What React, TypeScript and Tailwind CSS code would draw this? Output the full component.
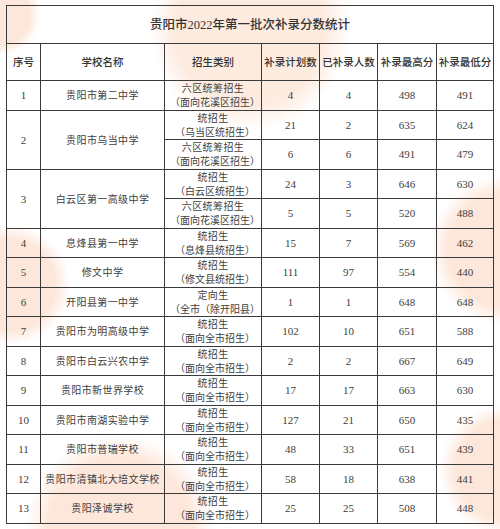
import React from 'react'

type Row = {
  no: number
  school: string
  subs: { type: string; area: string; plan: number; done: number; max: number; min: number }[]
}

const rows: Row[] = [
  { no: 1, school: '贵阳市第二中学', subs: [{ type: '六区统筹招生', area: '（面向花溪区招生）', plan: 4, done: 4, max: 498, min: 491 }] },
  {
    no: 2,
    school: '贵阳市乌当中学',
    subs: [
      { type: '统招生', area: '（乌当区统招生）', plan: 21, done: 2, max: 635, min: 624 },
      { type: '六区统筹招生', area: '（面向花溪区招生）', plan: 6, done: 6, max: 491, min: 479 },
    ],
  },
  {
    no: 3,
    school: '白云区第一高级中学',
    subs: [
      { type: '统招生', area: '（白云区统招生）', plan: 24, done: 3, max: 646, min: 630 },
      { type: '六区统筹招生', area: '（面向花溪区招生）', plan: 5, done: 5, max: 520, min: 488 },
    ],
  },
  { no: 4, school: '息烽县第一中学', subs: [{ type: '统招生', area: '（息烽县统招生）', plan: 15, done: 7, max: 569, min: 462 }] },
  { no: 5, school: '修文中学', subs: [{ type: '统招生', area: '（修文县统招生）', plan: 111, done: 97, max: 554, min: 440 }] },
  { no: 6, school: '开阳县第一中学', subs: [{ type: '定向生', area: '（全市（除开阳县）', plan: 1, done: 1, max: 648, min: 648 }] },
  { no: 7, school: '贵阳市为明高级中学', subs: [{ type: '统招生', area: '（面向全市招生）', plan: 102, done: 10, max: 651, min: 588 }] },
  { no: 8, school: '贵阳市白云兴农中学', subs: [{ type: '统招生', area: '（面向全市招生）', plan: 2, done: 2, max: 667, min: 649 }] },
  { no: 9, school: '贵阳市新世界学校', subs: [{ type: '统招生', area: '（面向全市招生）', plan: 17, done: 17, max: 663, min: 630 }] },
  { no: 10, school: '贵阳市南湖实验中学', subs: [{ type: '统招生', area: '（面向全市招生）', plan: 127, done: 21, max: 650, min: 435 }] },
  { no: 11, school: '贵阳市普瑞学校', subs: [{ type: '统招生', area: '（面向全市招生）', plan: 48, done: 33, max: 651, min: 439 }] },
  { no: 12, school: '贵阳市清镇北大培文学校', subs: [{ type: '统招生', area: '（面向全市招生）', plan: 58, done: 18, max: 638, min: 441 }] },
  { no: 13, school: '贵阳泽诚学校', subs: [{ type: '统招生', area: '（面向全市招生）', plan: 25, done: 25, max: 508, min: 448 }] },
]

const cjk = "font-['Noto_Sans_CJK_SC',sans-serif]"
const num = "font-['Liberation_Serif','Noto_Sans_CJK_SC',serif]"
const td = 'border border-[#3a3a3a] text-center align-middle p-0'

// faint watermark blobs painted as soft background layers
const blobs =
  'bg-[radial-gradient(circle_100px_at_250px_30px,#fdebe0_75%,#fdebe000),radial-gradient(circle_75px_at_505px_250px,#fde7da_75%,#fde7da00),radial-gradient(circle_60px_at_10px_285px,#fde7da_75%,#fde7da00),radial-gradient(circle_95px_at_120px_530px,#fde7da_75%,#fde7da00),radial-gradient(circle_65px_at_505px_470px,#fde7da_75%,#fde7da00),radial-gradient(circle_40px_at_0px_15px,#fde7da_75%,#fde7da00)]'

export default function App() {
  return (
    <div className={`w-[500px] h-[529px] overflow-hidden bg-white ${blobs}`}>
      <div className="pt-[5px] pl-[6px]">
        <table className={`table-fixed border-collapse w-[487px] text-[#404040] ${cjk}`}>
          <colgroup>
            <col className="w-[34px]" />
            <col className="w-[124px]" />
            <col className="w-[97px]" />
            <col className="w-[58px]" />
            <col className="w-[58px]" />
            <col className="w-[59px]" />
            <col className="w-[57px]" />
          </colgroup>
          <tbody>
            <tr className="h-[38px]">
              <td colSpan={7} className={`${td} text-[12.5px] font-medium text-[#333]`}>
                贵阳市<span className={num}>2022</span>年第一批次补录分数统计
              </td>
            </tr>
            <tr className="h-[37px] text-[10.5px] font-medium text-[#333] whitespace-nowrap">
              <td className={td}>序号</td>
              <td className={td}>学校名称</td>
              <td className={td}>招生类别</td>
              <td className={td}>补录计划数</td>
              <td className={td}>已补录人数</td>
              <td className={td}>补录最高分</td>
              <td className={td}>补录最低分</td>
            </tr>
            {rows.map(r =>
              r.subs.map((s, i) => (
                <tr key={`${r.no}-${i}`} className="h-[29.5px] text-[10px] leading-[14px]">
                  {i === 0 && (
                    <>
                      <td rowSpan={r.subs.length} className={`${td} ${num} text-[11px]`}>
                        {r.no}
                      </td>
                      <td rowSpan={r.subs.length} className={`${td} tracking-[0.4px] whitespace-nowrap`}>
                        {r.school}
                      </td>
                    </>
                  )}
                  <td className={`${td} whitespace-nowrap`}>
                    <div className="tracking-[0.4px]">{s.type}</div>
                    <div className="-mr-[4px]">{s.area}</div>
                  </td>
                  <td className={`${td} ${num} text-[11px]`}>{s.plan}</td>
                  <td className={`${td} ${num} text-[11px]`}>{s.done}</td>
                  <td className={`${td} ${num} text-[11px]`}>{s.max}</td>
                  <td className={`${td} ${num} text-[11px]`}>{s.min}</td>
                </tr>
              ))
            )}
          </tbody>
        </table>
      </div>
    </div>
  )
}
